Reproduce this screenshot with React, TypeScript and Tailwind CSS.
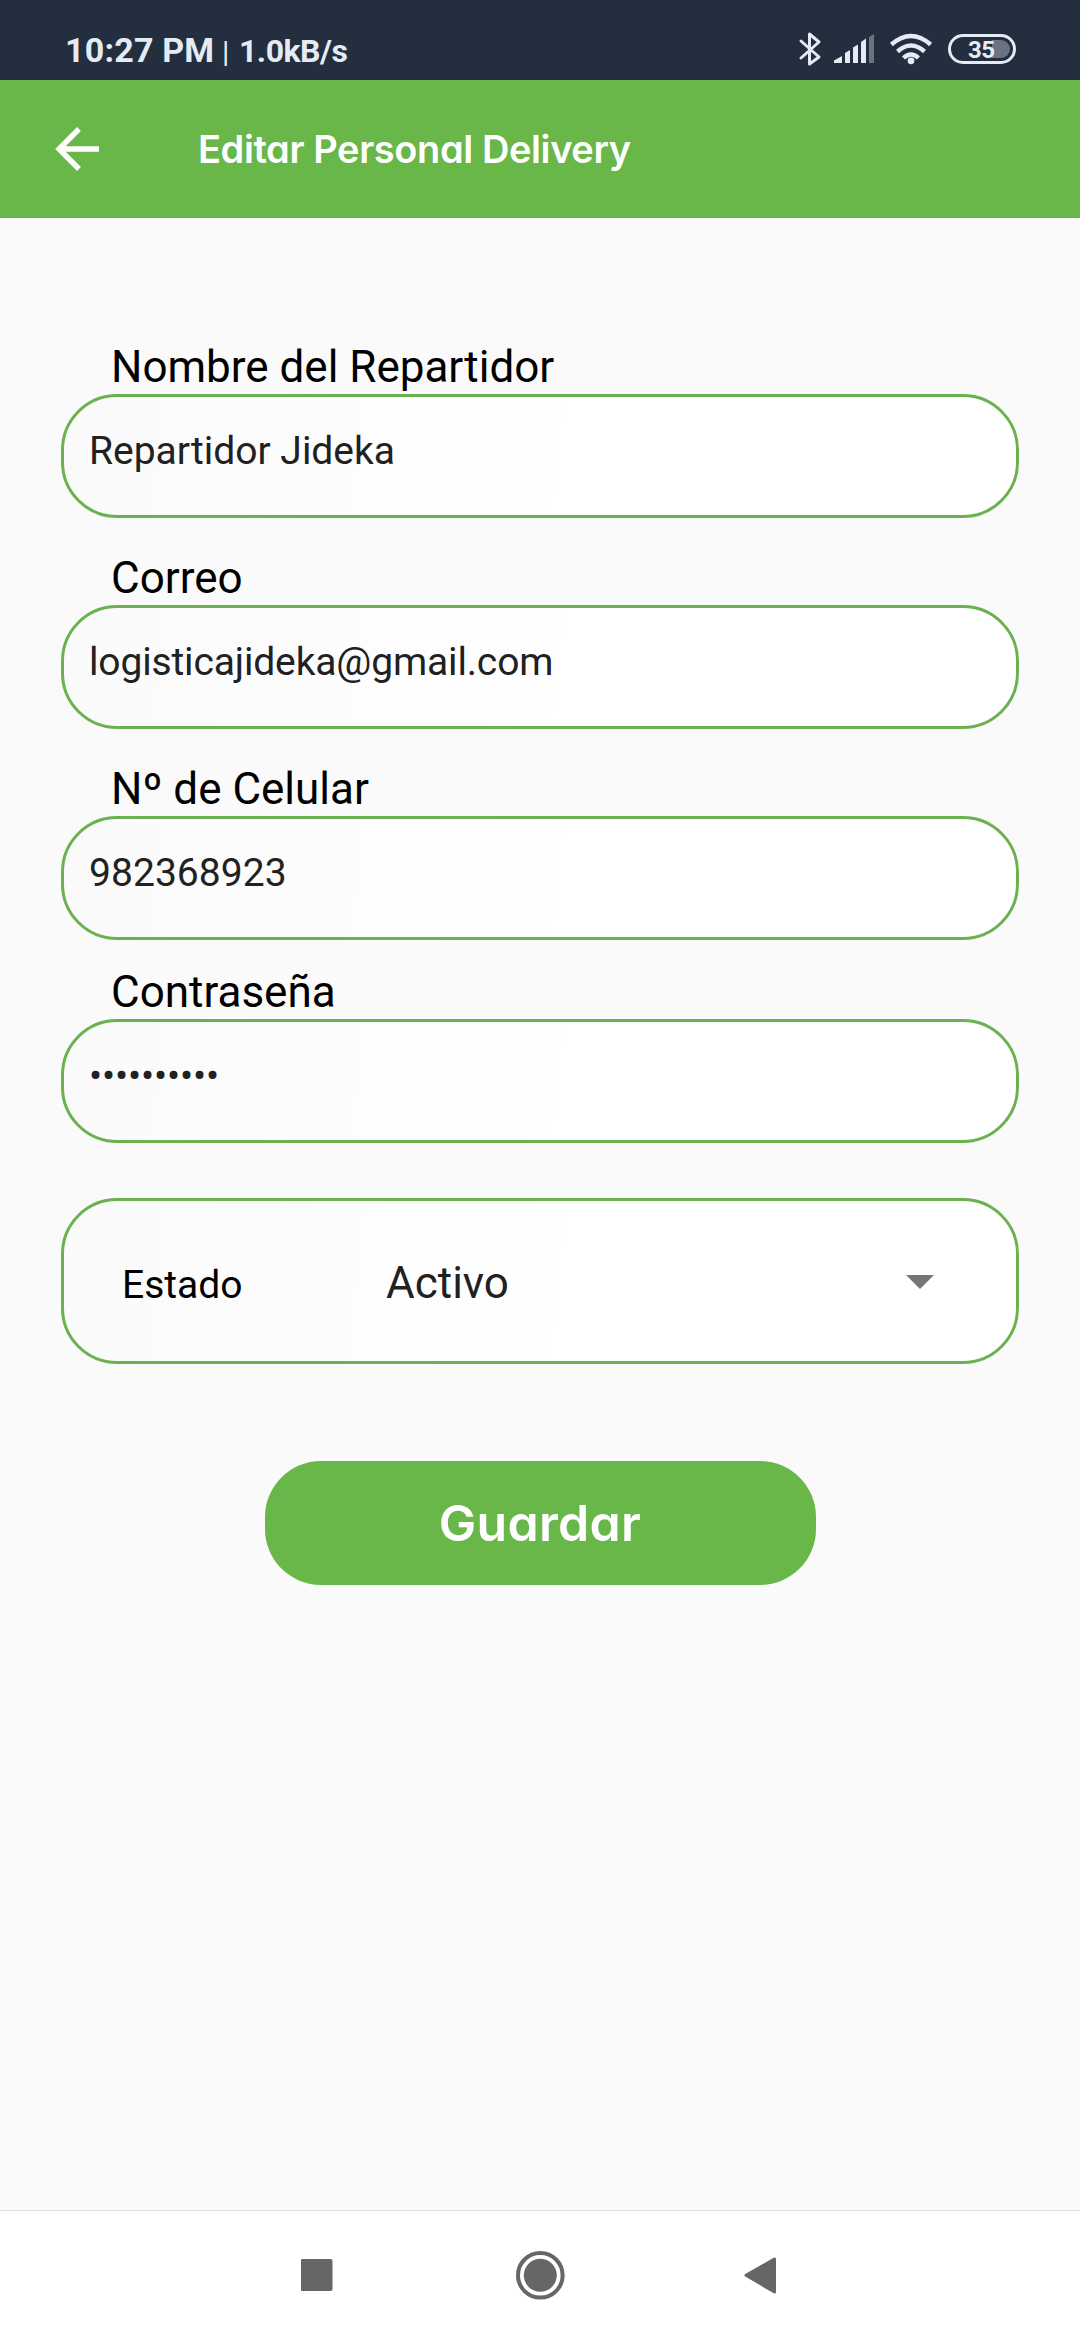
import React from "react";

const fields = [
  { label: "Nombre del Repartidor", value: "Repartidor Jideka", gap: "mt-[123px]", tracking: "tracking-normal" },
  { label: "Correo", value: "logisticajideka@gmail.com", gap: "mt-[34px]", tracking: "tracking-[-0.15px]" },
  { label: "Nº de Celular", value: "982368923", gap: "mt-[34px]", tracking: "tracking-[0.05px]" },
  { label: "Contraseña", value: "••••••••••", gap: "mt-[26px]", tracking: "tracking-[-0.15px]" },
];

const outline =
  "rounded-[56px] border-[3px] border-[#6bb150] bg-[linear-gradient(96deg,#fafafa,#ffffff_52%)]";

function StatusBar() {
  return (
    <div className="flex h-[80px] bg-[#232e3e] pl-[65px] pr-[64px] text-[#e6eaf3]">
      <div className="flex grow items-baseline pt-[30px] font-bold whitespace-nowrap">
        <span className="w-[157px] text-[34px] leading-[40px] tracking-[0.2px]">10:27 PM</span>
        <span className="w-[17px] text-[30px] leading-[40px] font-normal">|</span>
        <span className="text-[32px] leading-[40px] tracking-[-0.5px]">1.0kB/s</span>
      </div>
      <svg className="mt-[30px] h-[38px] w-[220px]" viewBox="796 30 220 38" fill="none">
        <path d="M801 41 L819 57 L809.5 64 V34 L819 42 L801 58" stroke="#e6eaf3" strokeWidth="3" strokeLinejoin="round" strokeLinecap="round" />
        <g fill="#e6eaf3">
          <path d="M834 63 V60.5 L842 56 V63 Z" />
          <path d="M845 63 V53 L850 50 V63 Z" />
          <path d="M853 63 V47.5 L858 44.5 V63 Z" />
          <path d="M861 63 V42 L866 38.5 V63 Z" />
          <path d="M869 63 V37 L874 34 V63 Z" fill="#6b7383" />
        </g>
        <g stroke="#e6eaf3" strokeWidth="4.4">
          <path d="M891.4 44.5 Q911 27.5 930.6 44.5" />
          <path d="M897.5 51.5 Q911 39.5 924.5 51.5" />
          <path d="M903.5 58 Q911 51 918.5 58" />
        </g>
        <circle cx="911" cy="60.8" r="3.4" fill="#e6eaf3" />
        <path d="M992 40 H1001 A9 9 0 0 1 1001 58 H992 Z" fill="#6b7383" />
        <rect x="949.5" y="35.5" width="65" height="27" rx="13.5" stroke="#e6eaf3" strokeWidth="3" />
        <text x="968" y="57.5" textLength="27" fontSize="24" fontWeight="700" fill="#e6eaf3">35</text>
      </svg>
    </div>
  );
}

function Header() {
  return (
    <header className="flex h-[138px] items-center bg-[#68b748] pl-[55px]">
      <svg className="h-[44px] w-[44px]" viewBox="0 0 44 44" fill="none" stroke="#fff" strokeWidth="5.4">
        <path d="M44 22 H4 M24 2 L4 22 L24 42" />
      </svg>
      <h1 className="ml-[99px] font-[Inter] text-[38px] leading-[48px] font-semibold tracking-[-0.4px] whitespace-nowrap text-white [font-feature-settings:'cv11']">
        Editar Personal Delivery
      </h1>
    </header>
  );
}

function NavBar() {
  return (
    <nav className="flex h-[130px] items-center justify-center border-t border-[#e0e0e0] bg-white pb-px">
      <svg className="h-[50px] w-[478px]" viewBox="300 2250 478 50" fill="#666">
        <rect x="299.5" y="2259" width="32" height="32" rx="2" />
        <circle cx="539.3" cy="2275.3" r="22.3" fill="none" stroke="#666" strokeWidth="4" />
        <circle cx="539.3" cy="2275.3" r="16.5" />
        <path d="M745 2275.3 L773.5 2259 V2292 Z" stroke="#666" strokeWidth="3" strokeLinejoin="round" />
      </svg>
    </nav>
  );
}

export default function App() {
  return (
    <div className="flex h-[2340px] w-[1080px] flex-col overflow-hidden bg-[#fafafa] font-[Roboto]">
      <StatusBar />
      <Header />
      <main className="flex grow flex-col px-[61px]">
        {fields.map((f) => (
          <div key={f.label} className={f.gap}>
            <div className="h-[53px] pl-[50px] text-[44px] leading-[52px] whitespace-nowrap text-black">{f.label}</div>
            <div className={`h-[124px] pt-[31px] pl-[25px] text-[39px] leading-[46px] text-[#212121] ${f.tracking} ${outline}`}>
              {f.value}
            </div>
          </div>
        ))}
        <div className={`mt-[55px] flex h-[166px] items-baseline pt-[56px] pl-[58px] ${outline}`}>
          <span className="w-[264px] text-[39px] leading-[52px] text-black">Estado</span>
          <span className="grow text-[44px] leading-[52px] text-[#212121]">Activo</span>
          <svg className="mr-[82px] h-[23px] w-[28px]" viewBox="0 0 28 23">
            <path d="M0 0 H28 L14 14 Z" fill="#757575" />
          </svg>
        </div>
        <button className="mt-[97px] flex h-[124px] w-[551px] items-center justify-center self-center rounded-[56px] bg-[#68b748] font-[Inter] text-[50px] font-semibold tracking-[0.3px] text-white [font-feature-settings:'cv11']">
          Guardar
        </button>
      </main>
      <NavBar />
    </div>
  );
}
